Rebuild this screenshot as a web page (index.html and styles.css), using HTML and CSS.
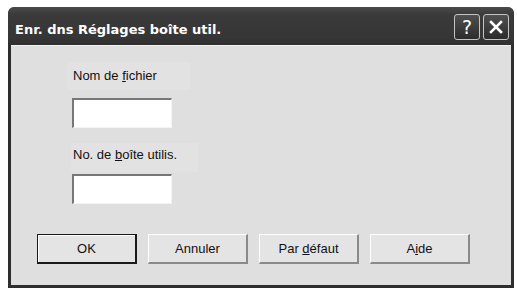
FILE: index.html
```html
<!DOCTYPE html>
<html lang="fr">
<head>
    <meta charset="UTF-8">
    <title>Enr. dns Réglages boîte util.</title>
    <link rel="stylesheet" href="styles.css">
</head>
<body>
    <div class="window">
        <div class="titlebar">
            <span class="title">Enr. dns Réglages boîte util.</span>
            <div class="caption-btns">
                <button class="cap-btn">?</button>
                <button class="cap-btn">
                    <svg width="16" height="16" viewBox="0 0 16 16">
                        <path d="M3 3 L13 13 M13 3 L3 13" stroke="#fff" stroke-width="2.6" stroke-linecap="square"/>
                    </svg>
                </button>
            </div>
        </div>
        <div class="content">
            <div class="field">
                <label class="label label-one">Nom de <u>f</u>ichier</label>
                <input type="text" class="input">
            </div>
            <div class="field">
                <label class="label label-two">No. de <u>b</u>oîte utilis.</label>
                <input type="text" class="input">
            </div>
            <div class="buttons">
                <button class="btn btn-default">OK</button>
                <button class="btn">Annuler</button>
                <button class="btn">Par <u>d</u>éfaut</button>
                <button class="btn">A<u>i</u>de</button>
            </div>
        </div>
    </div>
</body>
</html>
```

FILE: styles.css
```css
* {
    margin: 0;
    padding: 0;
    box-sizing: border-box;
}

body {
    background: #fff;
    font-family: "Liberation Sans", sans-serif;
    padding: 7px 3px 0 8px;
}

.window {
    width: 506px;
    height: 281px;
    background: #2e2e2e;
    border-radius: 7px 7px 0 0;
    padding: 0 3px 3px 3px;
    display: flex;
    flex-direction: column;
}

.titlebar {
    height: 38px;
    display: flex;
    align-items: center;
    justify-content: space-between;
    background: linear-gradient(#4a4a4a 0%, #3a3a3a 20%, #363636 80%, #303030 100%);
    border-radius: 6px 6px 0 0;
    margin: 0 -3px;
    padding: 0 5px 0 7px;
}

.title {
    color: #fff;
    font-family: "DejaVu Sans", sans-serif;
    font-weight: bold;
    font-size: 13px;
    padding-top: 6px;
}

.caption-btns {
    display: flex;
    gap: 3px;
    padding-top: 1px;
}

.cap-btn {
    width: 26px;
    height: 26px;
    border: 1px solid #c4c4c4;
    border-radius: 3px;
    background: linear-gradient(#505050, #2c2c2c);
    color: #fff;
    font-family: "DejaVu Sans", sans-serif;
    font-size: 19px;
    display: flex;
    align-items: center;
    justify-content: center;
}

.content {
    flex: 1;
    background: #dfdfdf;
    border-top: 1px solid #f2f2f2;
    padding: 16px 0 0 61px;
    display: flex;
    flex-direction: column;
}

.field {
    display: flex;
    flex-direction: column;
    align-items: flex-start;
}

.label {
    font-size: 13px;
    line-height: 16px;
    color: #111;
    background: #e2e2e2;
}

.label-one {
    width: 123px;
    height: 28px;
    margin-left: -5px;
    padding: 6px 0 0 6px;
    margin-bottom: 8px;
}

.label-two {
    width: 127px;
    height: 29px;
    margin-top: 15px;
    margin-left: -1px;
    padding: 4px 0 0 2px;
    margin-bottom: 2px;
}

.input {
    width: 100px;
    height: 30px;
    background: #fff;
    border: 1px solid #f4f4f4;
    border-top: 2px solid #777;
    border-left: 2px solid #777;
}

.buttons {
    display: flex;
    gap: 11px;
    margin-top: 30px;
    margin-left: -35px;
}

.btn {
    width: 100px;
    height: 30px;
    font-family: "Liberation Sans", sans-serif;
    font-size: 13px;
    color: #111;
    background: #e4e4e4;
    border: 1px solid #fff;
    border-right: 2px solid #8a8a8a;
    border-bottom: 2px solid #8a8a8a;
}

.btn-default {
    border: 1px solid #1a1a1a;
    border-right: 2px solid #1a1a1a;
    border-bottom: 2px solid #1a1a1a;
    box-shadow: inset 1px 1px 0 #fff;
}
```
